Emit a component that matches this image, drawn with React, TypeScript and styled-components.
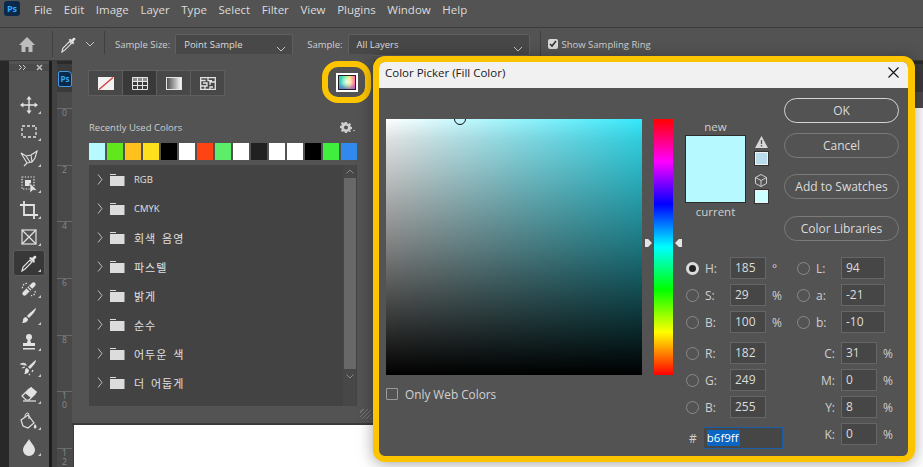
import React from "react";
import styled, { createGlobalStyle } from "styled-components";

const GlobalStyle = createGlobalStyle`
  html, body { margin: 0; padding: 0; background: #535353; }
  * { box-sizing: border-box; }
`;

const uiFont = `"Open Sans", "Noto Sans", "Noto Sans CJK KR", sans-serif`;
const iconColor = "#e2e2e2";

const Page = styled.div`
  position: relative;
  width: 923px;
  height: 467px;
  overflow: hidden;
  background: #535353;
  color: #d6d6d6;
  font-family: ${uiFont};
  display: flex;
  flex-direction: column;
`;

const MenuBar = styled.div`
  height: 28px;
  flex: none;
  display: flex;
  align-items: flex-start;
  padding: 1px 0 0 4px;
  border-bottom: 1px solid #3a3a3a;
`;

const LogoBadge = styled.div`
  width: 16px;
  height: 15px;
  border-radius: 3px;
  background: #0b2a4a;
  color: #31a8ff;
  font-size: 9px;
  font-weight: 700;
  line-height: 15px;
  text-align: center;
  margin-right: 14px;
`;

const MenuItem = styled.span`
  font-size: 11.5px;
  line-height: 18px;
  color: #dcdcdc;
  margin-right: 11.6px;
`;

const OptionsBar = styled.div`
  height: 33px;
  flex: none;
  display: flex;
  align-items: center;
  padding-left: 19px;
  border-bottom: 1px solid #3a3a3a;
`;

const BarDivider = styled.div<{ $left: number; $right: number }>`
  width: 1px;
  height: 26px;
  background: #3f3f3f;
  margin: 0 ${(p) => p.$right}px 0 ${(p) => p.$left}px;
`;

const OptionLabel = styled.span<{ $right: number }>`
  font-size: 9.5px;
  color: #cfcfcf;
  margin-right: ${(p) => p.$right}px;
  white-space: nowrap;
`;

const OptionSelect = styled.div<{ $width: number }>`
  width: ${(p) => p.$width}px;
  height: 22px;
  margin-top: 2px;
  padding: 3px 6px 0 8px;
  font-size: 9.5px;
  color: #dcdcdc;
  background: #484848;
  border: 1px solid #5f5f5f;
  border-radius: 2px;
  display: flex;
  justify-content: space-between;
  line-height: 14px;
`;

const RingCheck = styled.div`
  width: 10px;
  height: 10px;
  border-radius: 2px;
  background: #d8d8d8;
  margin-right: 4px;
  display: flex;
  align-items: center;
  justify-content: center;
`;

const Workspace = styled.div`
  flex: 1;
  display: flex;
  min-height: 0;
`;

const LeftGutter = styled.div`
  width: 9px;
  background: #282828;
`;

const ToolBar = styled.div`
  width: 40px;
  background: #535353;
  padding-top: 3px;
  display: flex;
  flex-direction: column;
  align-items: center;
  border-radius: 3px 3px 0 0;
`;

const ToolHeader = styled.div`
  width: 100%;
  height: 13px;
  background: #4a4a4a;
  display: flex;
  justify-content: space-between;
  align-items: center;
  padding: 0 6px 0 9px;
`;

const ToolGrip = styled.div`
  width: 20px;
  height: 4px;
  margin: 5px 0 16px;
  background: repeating-linear-gradient(90deg, #777 0 1px, transparent 1px 3px);
`;

const ToolItem = styled.div<{ $active?: boolean }>`
  position: relative;
  width: 32px;
  height: 26.3px;
  flex: none;
  display: flex;
  align-items: center;
  justify-content: center;
  background: ${(p) => (p.$active ? "#383838" : "transparent")};
  border: 1px solid ${(p) => (p.$active ? "#5c5c5c" : "transparent")};
  border-radius: 3px;
  &::after {
    content: "";
    position: absolute;
    right: 3px;
    bottom: 3px;
    border-left: 3px solid transparent;
    border-bottom: 3px solid #c8c8c8;
  }
`;

const ToolDivider = styled.div`
  width: 3px;
  background: #1c1c1c;
`;

const SideStrip = styled.div`
  width: 5px;
  background: #414141;
`;

const DocArea = styled.div`
  flex: 1;
  display: flex;
  flex-direction: column;
  min-width: 0;
`;

const TabStrip = styled.div`
  height: 31px;
  flex: none;
  background: #3a3a3a;
  border-top: 3px solid #2a2a2a;
  padding: 7px 0 0 1px;
`;

const DocTab = styled.div`
  width: 14px;
  height: 16px;
  background: #0b2a4a;
  border: 1px solid #3f9ae6;
  border-radius: 2px 4px 2px 2px;
  color: #31a8ff;
  font-size: 8px;
  font-weight: 700;
  line-height: 14px;
  text-align: center;
`;

const TopRuler = styled.div`
  height: 16px;
  flex: none;
  background: #4a4a4a;
`;

const DocBody = styled.div`
  flex: 1;
  display: flex;
  min-height: 0;
`;

const SideRuler = styled.div`
  width: 17px;
  flex: none;
  background: #494949;
  border-right: 1px solid #3c3c3c;
`;

const RulerMark = styled.div`
  height: 56.7px;
  border-top: 1px solid #6a6a6a;
  padding: 0 0 0 5px;
  font-size: 8.5px;
  line-height: 8.5px;
  color: #8a8a8a;
  width: 15px;
  white-space: pre-line;
`;

const Canvas = styled.div`
  flex: 1;
  background: #fff;
`;

const SwatchPanel = styled.div`
  position: absolute;
  left: 72px;
  top: 54px;
  width: 302px;
  height: 371px;
  background: #535353;
  border-bottom: 2px solid #3a3a3a;
  padding: 16px 16px 0;
  display: flex;
  flex-direction: column;
`;

const PanelTop = styled.div`
  height: 26px;
  display: flex;
  justify-content: space-between;
`;

const ToggleGroup = styled.div`
  display: flex;
`;

const ToggleButton = styled.div<{ $active?: boolean }>`
  width: 35px;
  height: 26px;
  margin-right: -1px;
  display: flex;
  align-items: center;
  justify-content: center;
  background: ${(p) => (p.$active ? "#393939" : "#484848")};
  border: 1px solid #5e5e5e;
`;

const PickerRing = styled.div`
  position: absolute;
  left: 250px;
  top: 7px;
  width: 49px;
  height: 42px;
  border: 6px solid #fdc400;
  border-radius: 16px;
  display: flex;
  align-items: center;
  justify-content: center;
`;

const PickerIcon = styled.div`
  width: 22px;
  height: 19px;
  border: 2px solid #fff;
  box-shadow: inset 0 0 0 1px #222;
  background:
    radial-gradient(circle at 50% 45%, rgba(255, 255, 255, 0.85), transparent 55%),
    linear-gradient(to bottom, transparent 55%, rgba(110, 60, 220, 0.7)),
    linear-gradient(to right, #22b8e0, #66f090 40%, #ffe070 65%, #ff5cb0);
`;

const PanelHeading = styled.div`
  height: 16px;
  margin-top: 23px;
  padding: 0 3px 0 1px;
  display: flex;
  justify-content: space-between;
  align-items: center;
  font-size: 9.5px;
  color: #cdcdcd;
`;

const SwatchRow = styled.div`
  display: flex;
  gap: 2px;
  margin: 8px 0 5px 1px;
`;

const Swatch = styled.div<{ $color: string }>`
  width: 16px;
  height: 17px;
  background: ${(p) => p.$color};
`;

const FolderList = styled.div`
  position: relative;
  height: 241px;
  margin-left: 1px;
  width: 268px;
  background: #434343;
`;

const FolderRow = styled.div`
  height: 29px;
  display: flex;
  align-items: center;
  padding-left: 8px;
`;

const FolderName = styled.span<{ $cjk: boolean }>`
  margin-left: 9px;
  color: #e0e0e0;
  font-size: ${(p) => (p.$cjk ? 11 : 9.5)}px;
  letter-spacing: ${(p) => (p.$cjk ? 1 : 0)}px;
  word-spacing: ${(p) => (p.$cjk ? 2 : 0)}px;
`;

const ScrollTrack = styled.div`
  position: absolute;
  right: 1px;
  top: 0;
  bottom: 0;
  width: 13px;
  background: #474747;
  display: flex;
  flex-direction: column;
  align-items: center;
  padding-top: 4px;
`;

const ScrollThumb = styled.div`
  width: 12px;
  height: 191px;
  margin: 4px 0 5px;
  background: #686868;
`;

const ResizeGrip = styled.div`
  position: absolute;
  right: 3px;
  bottom: 4px;
  width: 11px;
  height: 10px;
  background: repeating-linear-gradient(135deg, transparent 0 2px, #777 2px 3px);
`;

const Dialog = styled.div`
  position: absolute;
  left: 373px;
  top: 56px;
  width: 542px;
  height: 406px;
  background: #535353;
  border: 6px solid #fdc400;
  border-right-width: 7px;
  border-radius: 12px;
  box-shadow: 0 2px 16px rgba(0, 0, 0, 0.35);
  display: flex;
  flex-direction: column;
  overflow: hidden;
`;

const TitleBar = styled.div`
  height: 26px;
  flex: none;
  background: #f1f1f1;
  color: #1a1a1a;
  display: flex;
  align-items: center;
  justify-content: space-between;
  padding: 0 9px 5px 6px;
  font-family: "Open Sans", sans-serif;
  font-size: 11.5px;
`;

const DialogBody = styled.div`
  flex: 1;
  display: flex;
  padding: 10px 9px 0 7px;
`;

const PickerColumn = styled.div`
  width: 256px;
  margin-top: 21px;
`;

const ColorField = styled.div`
  position: relative;
  width: 256px;
  height: 256px;
  overflow: hidden;
  background:
    linear-gradient(
      to bottom,
      rgba(0, 0, 0, 0) 0%,
      rgba(0, 0, 0, 0.12) 8%,
      rgba(0, 0, 0, 0.5) 50%,
      rgba(0, 0, 0, 0.92) 92%,
      #000 100%
    ),
    linear-gradient(to right, #fff, #35e8fb);
`;

const FieldCursor = styled.div`
  position: absolute;
  left: 68px;
  top: -6px;
  width: 12px;
  height: 12px;
  border: 1px solid #111;
  border-radius: 50%;
`;

const WebColors = styled.div`
  display: flex;
  align-items: center;
  margin-top: 11px;
  font-size: 11.8px;
  color: #d2d2d2;
  gap: 7px;
`;

const WebCheck = styled.div`
  width: 12px;
  height: 12px;
  border: 1px solid #9a9a9a;
  border-radius: 1px;
`;

const HueWrap = styled.div`
  position: relative;
  width: 19px;
  height: 256px;
  margin: 21px 12px 0;
  background: linear-gradient(
    to bottom,
    #ff0000 0%,
    #ff00ff 16.6%,
    #0000ff 33.3%,
    #00ffff 50%,
    #00ff00 66.6%,
    #ffff00 83.3%,
    #ff0000 100%
  );
`;

const HueArrow = styled.div<{ $side: "left" | "right" }>`
  position: absolute;
  top: 120px;
  ${(p) => (p.$side === "left" ? "left: -9px;" : "right: -9px;")}
  width: 7px;
  height: 8px;
  background: #e4e4e4;
  clip-path: ${(p) =>
    p.$side === "left"
      ? "polygon(0 0, 45% 0, 100% 50%, 45% 100%, 0 100%)"
      : "polygon(100% 0, 55% 0, 0 50%, 55% 100%, 100% 100%)"};
`;

const Controls = styled.div`
  width: 214px;
  display: flex;
  flex-direction: column;
`;

const ControlsTop = styled.div`
  height: 159px;
  flex: none;
  display: flex;
  justify-content: space-between;
`;

const PreviewGroup = styled.div`
  margin-top: 20px;
  display: flex;
  gap: 8px;
`;

const PreviewColumn = styled.div`
  width: 61px;
  text-align: center;
  font-size: 11.5px;
  line-height: 17px;
  color: #cfcfcf;
`;

const PreviewBlock = styled.div`
  height: 68px;
  background: #b6f9ff;
  border: 1px solid #2c2c2c;
`;

const AlertColumn = styled.div`
  width: 14px;
  padding-top: 18px;
  display: flex;
  flex-direction: column;
  align-items: center;
`;

const GamutSwatch = styled.div<{ $color: string; $top: number }>`
  width: 13px;
  height: 13px;
  margin-top: ${(p) => p.$top}px;
  background: ${(p) => p.$color};
  border: 1px solid #f0f0f0;
  outline: 1px solid #333;
  outline-offset: 0;
`;

const ButtonStack = styled.div`
  width: 115px;
  display: flex;
  flex-direction: column;
`;

const PillButton = styled.div<{ $primary?: boolean; $top: number }>`
  height: 25px;
  margin-top: ${(p) => p.$top}px;
  border-style: solid;
  border-color: ${(p) => (p.$primary ? "#d4d4d4" : "#7a7a7a")};
  border-width: ${(p) => (p.$primary ? 1.5 : 1)}px;
  border-radius: 13px;
  text-align: center;
  font-size: 12px;
  line-height: 24px;
  color: #dcdcdc;
`;

const FieldColumns = styled.div`
  display: flex;
`;

const FieldColumn = styled.div<{ $width: number; $inset?: number }>`
  width: ${(p) => p.$width}px;
  padding-left: ${(p) => p.$inset ?? 0}px;
  display: flex;
  flex-direction: column;
  gap: 9px;
`;

const FieldGroup = styled.div`
  display: flex;
  flex-direction: column;
  gap: 5px;
`;

const FieldRow = styled.div`
  height: 22px;
  display: flex;
  align-items: center;
  font-size: 12px;
  color: #cfcfcf;
`;

const HexRow = styled(FieldRow)`
  padding-left: 3px;
`;

const Radio = styled.div<{ $on?: boolean }>`
  width: 13px;
  height: 13px;
  flex: none;
  border-radius: 50%;
  border: ${(p) => (p.$on ? "3.5px solid #dcdcdc" : "1px solid #8a8a8a")};
  background: ${(p) => (p.$on ? "#222" : "transparent")};
`;

const FieldLabel = styled.span<{ $left: number; $width: number; $right?: boolean }>`
  width: ${(p) => p.$width}px;
  margin-left: ${(p) => p.$left}px;
  flex: none;
  text-align: ${(p) => (p.$right ? "right" : "left")};
`;

const NumberBox = styled.div<{ $width: number; $gap?: number }>`
  width: ${(p) => p.$width}px;
  height: 22px;
  flex: none;
  margin-left: ${(p) => p.$gap ?? 0}px;
  background: #464646;
  border: 1px solid #666;
  padding-left: 4px;
  line-height: 19px;
  font-size: 12px;
  color: #dcdcdc;
`;

const Unit = styled.span`
  margin-left: 6px;
  font-size: 12px;
`;

const HexBox = styled.div`
  width: 80px;
  height: 22px;
  margin-left: 6px;
  background: #464646;
  border: 1px solid #1b5ea6;
  padding: 2px 0 0 3px;
  font-size: 11.5px;
  line-height: 16px;
`;

const HexSelection = styled.span`
  display: inline-block;
  background: #0a66c2;
  color: #fff;
  height: 16px;
  padding-right: 1px;
`;

const toolIcons: React.ReactNode[] = [
  <>
    <path d="M9 1v16M1 9h16" strokeWidth="1.4" />
    <path d="M9 0l2.6 3.4H6.4zM9 18l2.6-3.4H6.4zM0 9l3.4-2.6v5.2zM18 9l-3.4-2.6v5.2z" fill={iconColor} stroke="none" />
  </>,
  <rect x="2" y="4" width="14" height="11" strokeDasharray="3 2" strokeWidth="1.3" />,
  <>
    <path d="M1 4l5 3 5-1 6-4-2 7-3 4-5 1zM7 14l-3 3M6 7l4 6M11 6l1 7" strokeWidth="1.1" />
  </>,
  <>
    <rect x="2" y="2" width="12" height="12" strokeDasharray="1.4 1.4" strokeWidth="1.2" />
    <rect x="5" y="5" width="6" height="6" fill={iconColor} stroke="none" />
    <path d="M10 8v10l2.8-2.8H17z" fill={iconColor} stroke="#535353" strokeWidth=".6" />
  </>,
  <path d="M4 0v14h14M0 4h14v14" strokeWidth="1.8" />,
  <>
    <rect x="2" y="2" width="14" height="14" strokeWidth="1.2" />
    <path d="M2 2l14 14M16 2L2 16" strokeWidth="1.2" />
  </>,
  <>
    <path d="M2 17l1-4 7-7 2 2-7 7z" strokeWidth="1.2" />
    <path d="M9 4l5 5 1-2-1-1 2-2c1-1 0-3-2-2l-2 2-1-1z" fill={iconColor} stroke="none" />
  </>,
  <>
    <path d="M3 12L12 3c2-2 5 1 3 3l-9 9c-2 2-5-1-3-3z" fill={iconColor} stroke="none" />
    <path d="M7 3.5C4 3 2 6 2.500 9M15 11c1 3-2 5-4 4.500" strokeDasharray="1.5 1.500" strokeWidth="1.2" />
    <path d="M7 8l3 3M9 6.500l3 3" stroke="#535353" strokeWidth="1.2" />
  </>,
  <path d="M16 1c0 3-5 8-7 10l-2-2C9 7 14 2 16 1zM6 10l2 2c0 3-3 4-6 4 1-1 1-2 1-3 0-2 2-3 3-3z" fill={iconColor} stroke="none" />,
  <>
    <circle cx="9" cy="4" r="3" fill={iconColor} stroke="none" />
    <path d="M8 6h2l1 4h4v3H3v-3h4zM3 15h12v1.500H3z" fill={iconColor} stroke="none" />
  </>,
  <>
    <path d="M16 1c0 3-4 7-6 9l-2-2C10 6 14 2 16 1zM7 9l2 2c0 3-2 4-5 4 1-1 1-2 1-3 0-2 1-3 2-3z" fill={iconColor} stroke="none" />
    <path d="M1 5c2-1 4-1 5 1-2 0-3 0-5-1zM2 9l3-1M13 11l-1 2M10 15l-1 1" strokeWidth="1.2" />
  </>,
  <>
    <path d="M2 11l7-7 6 5-6 6H6z" strokeWidth="1.2" />
    <path d="M9 4l2-2 6 5-2 2z" fill={iconColor} stroke="none" />
    <path d="M11 2l6 5-6 6-6-5z" fill={iconColor} stroke="none" />
    <path d="M3 16h13" strokeWidth="1.2" />
  </>,
  <>
    <path d="M1 8l7-5 6 8-6 5-5-2z" strokeWidth="1.2" />
    <path d="M5 5c0-3 2-4 3-4s1 3 1 6" strokeWidth="1.1" />
    <path d="M15 12c2 2 2 4 .5 4.500S13 15 15 12z" fill={iconColor} stroke="none" />
  </>,
  <path d="M9 1c2 4 6 7 6 11a6 6 0 0 1-12 0c0-4 4-7 6-11z" fill={iconColor} stroke="none" />,
  <path d="M3 16c0-5 2-7 6-7s6 2 6 7z" fill={iconColor} stroke="none" />,
];

const menuItems = ["File", "Edit", "Image", "Layer", "Type", "Select", "Filter", "View", "Plugins", "Window", "Help"];
const recentColors = ["#b6f9ff", "#62e61c", "#ffc11c", "#ffe01c", "#000000", "#ffffff", "#ff4312", "#5cee6a", "#ffffff", "#212121", "#ffffff", "#ffffff", "#000000", "#3fee3f", "#3189ee"];
const folders = ["RGB", "CMYK", "회색 음영", "파스텔", "밝게", "순수", "어두운 색", "더 어둡게"];
const rulerLabels = ["0", "2", "4", "6", "8", "1\n0", "1\n2"];

const Chevron = () => (
  <svg width="10" height="6" viewBox="0 0 10 6" fill="none" stroke="#c4c4c4" strokeWidth="1">
    <path d="M1 1l4 4 4-4" />
  </svg>
);

const SelectChevron = styled.span`
  padding-top: 4px;
`;

const BarGap = styled.span<{ $width: number }>`
  width: ${(p) => p.$width}px;
`;

const Tool = ({ children, active }: { children: React.ReactNode; active?: boolean }) => (
  <ToolItem $active={active}>
    <svg width="18" height="18" viewBox="0 0 18 18" fill="none" stroke={iconColor}>
      {children}
    </svg>
  </ToolItem>
);

const Field = ({ label, value, unit, on, width = 36 }: { label: string; value: string; unit?: string; on?: boolean; width?: number }) => (
  <FieldRow>
    <Radio $on={on} />
    <FieldLabel $left={6} $width={25}>{label}</FieldLabel>
    <NumberBox $width={width}>{value}</NumberBox>
    {unit && <Unit>{unit}</Unit>}
  </FieldRow>
);

const CmykField = ({ label, value }: { label: string; value: string }) => (
  <FieldRow>
    <FieldLabel $left={18} $width={20} $right>{label}</FieldLabel>
    <NumberBox $width={36} $gap={6}>{value}</NumberBox>
    <Unit>%</Unit>
  </FieldRow>
);

export default function App() {
  return (
    <Page>
      <GlobalStyle />
      <MenuBar>
        <LogoBadge>Ps</LogoBadge>
        {menuItems.map((item) => (
          <MenuItem key={item}>{item}</MenuItem>
        ))}
      </MenuBar>

      <OptionsBar>
        <svg width="16" height="15" viewBox="0 0 16 15" fill="#bdbdbd">
          <path d="M8 0L0 8h2.500v7H6.500v-5h3v5h4V8H16z" />
        </svg>
        <BarDivider $left={17} $right={7} />
        <svg width="17" height="17" viewBox="0 0 18 18" fill="none" stroke={iconColor}>
          <path d="M2 17l1-4 7-7 2 2-7 7z" strokeWidth="1.2" />
          <path d="M9 4l5 5 1-2-1-1 2-2c1-1 0-3-2-2l-2 2-1-1z" fill={iconColor} stroke="none" />
        </svg>
        <BarGap $width={8} />
        <Chevron />
        <BarDivider $left={9} $right={10} />
        <OptionLabel $right={5}>Sample Size:</OptionLabel>
        <OptionSelect $width={118}>
          Point Sample
          <SelectChevron><Chevron /></SelectChevron>
        </OptionSelect>
        <BarGap $width={14} />
        <OptionLabel $right={5}>Sample:</OptionLabel>
        <OptionSelect $width={182}>
          All Layers
          <SelectChevron><Chevron /></SelectChevron>
        </OptionSelect>
        <BarDivider $left={10} $right={7} />
        <RingCheck>
          <svg width="8" height="8" viewBox="0 0 8 8" fill="none" stroke="#333" strokeWidth="1.6">
            <path d="M1 4l2 2 4-5" />
          </svg>
        </RingCheck>
        <OptionLabel $right={0}>Show Sampling Ring</OptionLabel>
      </OptionsBar>

      <Workspace>
        <LeftGutter />
        <ToolBar>
          <ToolHeader>
            <svg width="8" height="7" viewBox="0 0 8 7" fill="none" stroke="#cfcfcf" strokeWidth="1">
              <path d="M1 1l2.500 2.500L1 6M5 1l2.500 2.500L5 6" />
            </svg>
            <svg width="7" height="7" viewBox="0 0 7 7" fill="none" stroke="#bcbcbc" strokeWidth="1.6">
              <path d="M1 1l5 5M6 1L1 6" />
            </svg>
          </ToolHeader>
          <ToolGrip />
          {toolIcons.map((icon, i) => (
            <Tool key={i} active={i === 6}>{icon}</Tool>
          ))}
        </ToolBar>
        <ToolDivider />
        <SideStrip />
        <DocArea>
          <TabStrip>
            <DocTab>Ps</DocTab>
          </TabStrip>
          <TopRuler />
          <DocBody>
            <SideRuler>
              {rulerLabels.map((label) => (
                <RulerMark key={label}>{label}</RulerMark>
              ))}
            </SideRuler>
            <Canvas />
          </DocBody>
        </DocArea>
      </Workspace>

      <SwatchPanel>
        <PanelTop>
          <ToggleGroup>
            <ToggleButton>
              <svg width="16" height="13" viewBox="0 0 16 13">
                <rect width="16" height="13" fill="#f2f2f2" />
                <path d="M1 12.500L15 .5" stroke="#d43a3a" strokeWidth="1.3" />
              </svg>
            </ToggleButton>
            <ToggleButton $active>
              <svg width="16" height="13" viewBox="0 0 16 13">
                <rect width="16" height="4" fill="#8c8c8c" />
                <path d="M.5.500h15v12H.5zM.5 4.500h15M.5 8.500h15M5.500.5v12M10.500.5v12" fill="none" stroke="#e4e4e4" />
              </svg>
            </ToggleButton>
            <ToggleButton>
              <svg width="16" height="13" viewBox="0 0 16 13">
                <defs>
                  <linearGradient id="gr">
                    <stop offset="0" stopColor="#4a4a4a" />
                    <stop offset="1" stopColor="#fff" />
                  </linearGradient>
                </defs>
                <rect x=".5" y=".5" width="15" height="12" fill="url(#gr)" stroke="#e4e4e4" />
              </svg>
            </ToggleButton>
            <ToggleButton>
              <svg width="16" height="13" viewBox="0 0 16 13" fill="none" stroke="#e4e4e4" strokeWidth="1.3">
                <path d="M.7.700h14.600v11.600H.7zM.7 3.500h5M8 .7v3h4M15 5h-5v3M3 6h4v3H3M.7 9H3M5 12V9M10 12V10h3" />
              </svg>
            </ToggleButton>
          </ToggleGroup>
          <PickerRing>
            <PickerIcon />
          </PickerRing>
        </PanelTop>
        <PanelHeading>
          Recently Used Colors
          <svg width="15" height="11" viewBox="0 0 15 11" fill="#cfcfcf">
            <path d="M5 0h2l.3 1.400 1.200.5L9.800 1l1.200 1.300-.8 1.200.5 1.300 1.300.2v2l-1.300.3-.5 1.200.8 1.200L9.800 10l-1.300-.8-1.200.5L7 11H5l-.3-1.300-1.200-.5-1.300.8L1 8.700l.8-1.200-.5-1.200L0 6V4l1.300-.2.500-1.300L1 1.300 2.200 0l1.300.9 1.200-.5zM6 3.500a2 2 0 1 0 0 4 2 2 0 0 0 0-4z" />
            <path d="M13 8h2l-1 1.500z" />
          </svg>
        </PanelHeading>
        <SwatchRow>
          {recentColors.map((color, i) => (
            <Swatch key={i} $color={color} />
          ))}
        </SwatchRow>
        <FolderList>
          {folders.map((name, i) => (
            <FolderRow key={name}>
              <svg width="6" height="11" viewBox="0 0 6 11" fill="none" stroke="#bdbdbd">
                <path d="M1 .500l4 5-4 5" />
              </svg>
              <svg width="15" height="12" viewBox="0 0 15 12" fill="#dcdcdc" style={{ marginLeft: 7 }}>
                <path d="M0 0h6v1H0zM0 2h14.500v10H0z" />
              </svg>
              <FolderName $cjk={i > 1}>{name}</FolderName>
            </FolderRow>
          ))}
          <ScrollTrack>
            <svg width="8" height="5" viewBox="0 0 8 5" fill="none" stroke="#8a8a8a">
              <path d="M.5 4.500L4 1l3.500 3.500" />
            </svg>
            <ScrollThumb />
            <svg width="8" height="5" viewBox="0 0 8 5" fill="none" stroke="#8a8a8a">
              <path d="M.5.500L4 4 7.500.5" />
            </svg>
          </ScrollTrack>
        </FolderList>
        <ResizeGrip />
      </SwatchPanel>

      <Dialog>
        <TitleBar>
          Color Picker (Fill Color)
          <svg width="11" height="11" viewBox="0 0 11 11" fill="none" stroke="#111" strokeWidth="1.1">
            <path d="M.5.500l10 10M10.500.5l-10 10" />
          </svg>
        </TitleBar>
        <DialogBody>
          <PickerColumn>
            <ColorField>
              <FieldCursor />
            </ColorField>
            <WebColors>
              <WebCheck />
              Only Web Colors
            </WebColors>
          </PickerColumn>
          <HueWrap>
            <HueArrow $side="left" />
            <HueArrow $side="right" />
          </HueWrap>
          <Controls>
            <ControlsTop>
              <PreviewGroup>
                <PreviewColumn>
                  new
                  <PreviewBlock />
                  current
                </PreviewColumn>
                <AlertColumn>
                  <svg width="13" height="12" viewBox="0 0 13 12">
                    <path d="M6.500 0L13 12H0z" fill="#d8d8d8" />
                    <path d="M6.500 4v4M6.500 9v1.500" stroke="#535353" strokeWidth="1.3" />
                  </svg>
                  <GamutSwatch $color="#b8dcea" $top={4} />
                  <svg width="12" height="13" viewBox="0 0 12 13" fill="none" stroke="#cfcfcf" style={{ marginTop: 9 }}>
                    <path d="M6 .5l5.500 3v6L6 12.500l-5.500-3v-6zM.5 3.500L6 6.500l5.500-3M6 6.500v6" />
                  </svg>
                  <GamutSwatch $color="#ccffff" $top={3} />
                </AlertColumn>
              </PreviewGroup>
              <ButtonStack>
                <PillButton $primary $top={0}>OK</PillButton>
                <PillButton $top={10}>Cancel</PillButton>
                <PillButton $top={16}>Add to Swatches</PillButton>
                <PillButton $top={17}>Color Libraries</PillButton>
              </ButtonStack>
            </ControlsTop>
            <FieldColumns>
              <FieldColumn $width={112} $inset={1}>
                <FieldGroup>
                  <Field label="H:" value="185" unit="°" on />
                  <Field label="S:" value="29" unit="%" />
                  <Field label="B:" value="100" unit="%" />
                </FieldGroup>
                <FieldGroup>
                  <Field label="R:" value="182" />
                  <Field label="G:" value="249" />
                  <Field label="B:" value="255" />
                </FieldGroup>
                <HexRow>
                  #
                  <HexBox>
                    <HexSelection>b6f9ff</HexSelection>
                  </HexBox>
                </HexRow>
              </FieldColumn>
              <FieldColumn $width={102}>
                <FieldGroup>
                  <Field label="L:" value="94" width={44} />
                  <Field label="a:" value="-21" width={44} />
                  <Field label="b:" value="-10" width={44} />
                </FieldGroup>
                <FieldGroup>
                  <CmykField label="C:" value="31" />
                  <CmykField label="M:" value="0" />
                  <CmykField label="Y:" value="8" />
                  <CmykField label="K:" value="0" />
                </FieldGroup>
              </FieldColumn>
            </FieldColumns>
          </Controls>
        </DialogBody>
      </Dialog>
    </Page>
  );
}
